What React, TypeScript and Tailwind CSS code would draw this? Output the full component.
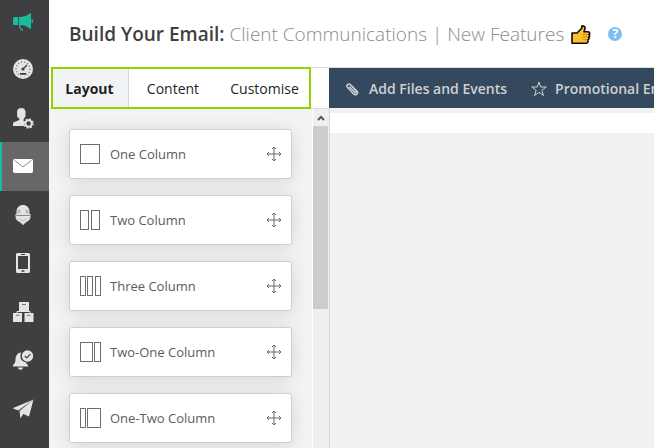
import type { ReactNode } from "react";
import clsx from "clsx";

function NavIcon({ children }: { children: ReactNode }) {
  return (
    <svg viewBox="0 0 22 22" className="h-[22px] w-[22px] fill-current" aria-hidden="true">
      {children}
    </svg>
  );
}

const NAV = [
  {
    label: "Dashboard",
    icon: (
      <>
        <circle cx="11" cy="11" r="10" />
        <circle cx="11" cy="11" r="7" fill="none" stroke="#3f3f41" strokeWidth="1.4" strokeDasharray="0.8 2.3" opacity="0.8" />
        <rect x="7" y="13.5" width="8" height="5" fill="#e4e4e5" />
        <circle cx="11" cy="11" r="1.6" fill="#3f3f41" />
        <path d="M11 11l4-4" stroke="#3f3f41" strokeWidth="1.2" />
        <rect x="7.8" y="15" width="6.6" height="1.8" rx="0.6" fill="#3f3f41" />
      </>
    ),
  },
  {
    label: "Contacts",
    icon: (
      <>
        <path d="M9.3 1c2.8 0 4.4 1.7 4.3 4.6 0 1-.1 1.5-.3 2.1.7.6.2 2-.5 2.3-.3 1.3-.9 2-1.3 2.5v1.6l1.8.8a5 5 0 0 0-1.2 4.1H1v-2.3c0-1 .5-1.5 1.5-1.8l4.8-2v-2.3C6.500 12 6 11 5.800 10 5 9.600 4.700 8.200 5.300 7.700 4.900 6 5 4.500 5.400 3.200 5.900 1.700 7.500 1 9.300 1z" />
        <circle cx="16.6" cy="16.5" r="3.2" fill="none" stroke="currentColor" strokeWidth="2" />
        <circle cx="16.6" cy="16.5" r="4.5" fill="none" stroke="currentColor" strokeWidth="1.4" strokeDasharray="1.8 1.73" />
      </>
    ),
  },
  {
    label: "Email",
    icon: (
      <>
        <rect x="1" y="4" width="20" height="14" rx="1.8" />
        <path d="M2.500 5.300L11 12l8.500-6.700" fill="none" stroke="#8b8b8b" strokeWidth="1" />
      </>
    ),
  },
  {
    label: "Surveys",
    icon: (
      <>
        <path d="M4.500 11V7.500C4.500 3.500 7.500 1 11 1s6.500 2.500 6.500 6.500V11z" />
        <path d="M3.500 10h15v2.500c0 3.200-2.200 5-5 5.700v1.300h-1.500L11.500 21h-1l-.5-1.500H8.500v-1.300c-2.800-.7-5-2.500-5-5.700z" />
        <path d="M5.500 5.500h3v4h-3zM13.500 5.500h3v4h-3z" fill="#b9b9bb" />
        <path d="M4 11.500h14" stroke="#8a8a8c" strokeWidth="1" />
        <path d="M6.500 14.500c2.500 2.500 6.500 2.500 9 0" fill="none" stroke="#b0b0b2" strokeWidth="0.8" />
      </>
    ),
  },
  {
    label: "SMS",
    icon: (
      <>
        <path fillRule="evenodd" d="M5.500 1h11A1.500 1.500 0 0 1 18 2.500v17a1.500 1.500 0 0 1-1.500 1.500h-11A1.500 1.500 0 0 1 4 19.500v-17A1.500 1.500 0 0 1 5.500 1zM6 4v13h10V4z" />
        <rect x="9" y="2" width="4" height="1" fill="#3f3f41" />
        <rect x="9.5" y="18.2" width="3" height="1.6" rx="0.5" fill="#3f3f41" />
      </>
    ),
  },
  {
    label: "Automation",
    icon: (
      <>
        <path d="M7 1h10v9H7zM1 12h9v9H1zM12.500 12h9v9h-9z" />
        <path d="M5 12.500V10.500h13v2M11.500 9v2" fill="none" stroke="currentColor" strokeWidth="1" />
        <path d="M10 3.500h4M4 14.300h3.500M15 14.300h3.500" stroke="#77777a" strokeWidth="1" />
      </>
    ),
  },
  {
    label: "Notifications",
    icon: (
      <>
        <path d="M9 3.500c-4 .5-5.300 3.500-5.500 7-.1 3-.8 4.300-2.500 5.600v1.400h15v-1.400c-1-.7-1.600-1.600-1.900-2.700a6 6 0 0 1-5.700-6c0-1.500.3-2.800.6-3.900z" />
        <path d="M6 18.500h5c-.2 1.500-1.200 2.200-2.500 2.200S6.200 20 6 18.500z" />
        <circle cx="15.5" cy="7" r="5.7" />
        <path d="M12.800 7l2 2 3.600-3.800" fill="none" stroke="#3f3f41" strokeWidth="1.1" />
      </>
    ),
  },
  {
    label: "Send",
    icon: (
      <>
        <path d="M21.500 1.500L.5 10.300l5.800 2.300z" />
        <path d="M21.500 1.500L7.500 13l.9 7.200 3-4.200 5.600 2.500z" />
      </>
    ),
  },
];

const TABS = ["Layout", "Content", "Customise"];

// Each layout is a list of [x, width] outlines on a 21px grid
const LAYOUTS: { name: string; cols: [number, number][] }[] = [
  { name: "One Column", cols: [[0, 20]] },
  { name: "Two Column", cols: [[0, 9], [11, 9]] },
  { name: "Three Column", cols: [[0, 6], [7, 6], [15, 6]] },
  { name: "Two-One Column", cols: [[0, 13], [14, 7]] },
  { name: "One-Two Column", cols: [[0, 6], [7, 14]] },
];

function MoveIcon() {
  return (
    <svg viewBox="0 0 16 16" className="h-4 w-4" fill="none" stroke="#6b6b6b" aria-hidden="true">
      <path d="M8 1.500v13M1.500 8h13" />
      <path d="M6 3l2-2 2 2M6 13l2 2 2-2M3 6L1 8l2 2M13 6l2 2-2 2" />
    </svg>
  );
}

function Sidebar() {
  return (
    <nav className="flex w-[49px] shrink-0 flex-col bg-[#3f3f41] pb-[15px] text-[#e4e4e5]">
      <a href="#home" aria-label="Home" className="flex h-[45px] shrink-0 items-center justify-center pr-[3px] pb-1 text-[#1abc9c]">
        <NavIcon>
          <path d="M1 8.500C1 7.500 1.700 7 2.500 7H6v8H2.500C1.700 15 1 14.500 1 13.500z" />
          <path d="M6.800 7C11.500 7 16 5.500 18 3.300h1v15.400h-1c-2-2.200-6.500-3.700-11.200-3.700z" />
          <path d="M19.500 9c2.200 0 2.200 4 0 4z" />
          <path d="M7.500 15c.3 3 1.300 4.700 3.500 5.500" fill="none" stroke="currentColor" strokeWidth="1.3" />
        </NavIcon>
      </a>
      {NAV.map(({ label, icon }) => (
        <a
          key={label}
          href={`#${label.toLowerCase()}`}
          aria-label={label}
          className={clsx(
            "flex flex-1 items-center justify-center",
            label === "Email" ? "border-l-2 border-[#1abc9c] bg-[#676767] pr-[5px] text-white" : "pr-[3px]",
          )}
        >
          <NavIcon>{icon}</NavIcon>
        </a>
      ))}
    </nav>
  );
}

function Header() {
  return (
    <header className="flex h-[68px] shrink-0 items-center border-b border-[#dcdcdc] pl-5 whitespace-nowrap">
      <h1 className="text-[19px] leading-7 font-light text-[#8c8c8c]">
        <span className="font-semibold text-[#3f3f41]">Build Your Email:</span> Client Communications | New Features
      </h1>
      <svg viewBox="0 0 20 20" className="ml-[7px] h-5 w-5" role="img" aria-label="Thumbs up">
        <path
          d="M1 9h5l4.500-4.500.5-2.500c.2-.5 2.700-.2 3 1.500.2 1.500-.5 2.900-1 4.200h4c2 0 2.300 2.200.8 2.700 1.300.5 1 2.400-.2 2.800.8.700.5 2.200-.6 2.500.5 1.500-.2 3.500-1.700 3.500H1z"
          fill="#fdbf2d"
          stroke="#0a0a0a"
          strokeWidth="1.6"
          strokeLinejoin="round"
        />
        <path d="M11.500 10.500h5.500M11.500 13h5.500M11.500 15.800h4.500" stroke="#c4780c" strokeWidth="0.8" />
      </svg>
      <button type="button" aria-label="Help" className="ml-[17px] flex h-[14px] w-[14px] items-center justify-center rounded-full bg-[#7cc0f2] text-[12px] leading-none font-bold text-white">
        ?
      </button>
    </header>
  );
}

function LayoutCard({ name, cols }: { name: string; cols: [number, number][] }) {
  return (
    <button
      type="button"
      className="flex h-[50px] shrink-0 items-center rounded-[3px] border border-[#cfcfcf] bg-white pr-[9px] pl-[10px] shadow-[0_2px_18px_rgba(0,0,0,0.12)]"
    >
      <svg viewBox="0 0 21 20" className="mr-[9px] h-5 w-[21px]" fill="none" stroke="#6e6e6e" aria-hidden="true">
        {cols.map(([x, w]) => (
          <rect key={x} x={x + 0.5} y="0.5" width={w - 1} height="19" />
        ))}
      </svg>
      <span className="flex-1 text-left text-[13px] leading-5 text-[#5c5c5c]">{name}</span>
      <MoveIcon />
    </button>
  );
}

function BuilderPanel() {
  return (
    <aside className="flex w-[281px] shrink-0 flex-col">
      <div className="-mt-px border-b border-[#dcdcdc] pl-[2px]">
        <div role="tablist" className="-mb-px flex h-[42px] w-[260px] border-2 border-[#8fd400]">
          {TABS.map((tab) => (
            <button
              key={tab}
              type="button"
              role="tab"
              aria-selected={tab === "Layout"}
              className={clsx(
                "pt-[2px] text-[14px] leading-5 text-[#1f1f1f]",
                tab === "Layout" && "w-[76px] border-r border-[#d8d8da] bg-[#f2f3f5] pr-[2px] font-bold",
                tab === "Content" && "w-[88px]",
                tab === "Customise" && "flex-1 pl-[3px]",
              )}
            >
              {tab}
            </button>
          ))}
        </div>
      </div>
      <div className="flex min-h-0 flex-1">
        <div className="flex flex-1 flex-col gap-4 overflow-hidden bg-[#f2f3f5] px-5 py-5">
          {LAYOUTS.map((layout) => (
            <LayoutCard key={layout.name} {...layout} />
          ))}
        </div>
        {/* Scroll track */}
        <div className="flex w-[18px] flex-col border-r border-l border-l-white border-r-[#dadada] bg-[#efefef]">
          <div className="flex h-[17px] items-center justify-center">
            <svg viewBox="0 0 8 6" className="h-[6px] w-2" fill="none" stroke="#555" strokeWidth="2" aria-hidden="true">
              <path d="M1 5l3-3 3 3" />
            </svg>
          </div>
          <div className="mr-px h-[183px] bg-[#cccccc]" />
        </div>
      </div>
    </aside>
  );
}

function EditorPane() {
  return (
    <main className="flex min-w-0 flex-1 flex-col bg-[#f1f1f1]">
      <div className="-ml-px flex h-10 shrink-0 items-center gap-6 overflow-hidden bg-[#34495e] pt-[2px] pl-4 text-[14px] leading-5 font-semibold whitespace-nowrap text-[#cdd0d3]">
        <button type="button" className="flex shrink-0 items-center gap-[10px]">
          <svg viewBox="0 0 14 14" className="h-[14px] w-[14px]" fill="none" stroke="currentColor" strokeWidth="1.5" aria-hidden="true">
            <path d="M4.200 4.500l5.300 5.600c1 1 2.500-.4 1.500-1.400L5.300 2.600C3.600.9.700 3.400 2.400 5.300l6.200 6.600c2.300 2.200 5.300-.6 3.200-2.900L7 4" />
          </svg>
          Add Files and Events
        </button>
        <button type="button" className="flex shrink-0 items-center gap-2">
          <svg viewBox="0 0 16 16" className="h-4 w-4" fill="none" stroke="currentColor" aria-hidden="true">
            <path d="M8 1l1.700 5h5.500l-4.400 3.300 1.700 5.200L8 11.400l-4.500 3.100 1.700-5.200L.8 6h5.500z" />
          </svg>
          Promotional Emails
        </button>
      </div>
      <div className="mt-[5px] h-5 shrink-0 bg-white" />
    </main>
  );
}

export default function App() {
  return (
    <div className="flex h-screen overflow-hidden bg-white font-['Open_Sans','Noto_Sans',sans-serif]">
      <Sidebar />
      <div className="flex min-w-0 flex-1 flex-col">
        <Header />
        <div className="flex min-h-0 flex-1">
          <BuilderPanel />
          <EditorPane />
        </div>
      </div>
    </div>
  );
}
